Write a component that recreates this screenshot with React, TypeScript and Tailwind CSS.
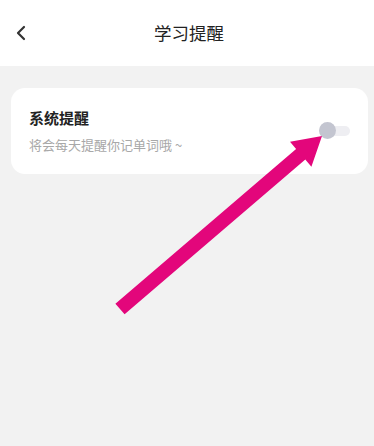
import React from 'react';

const font = { fontFamily: '"Noto Sans CJK SC", "Noto Sans", sans-serif' };

const Arrow: React.FC = () => (
  <svg className="absolute left-0 top-0 pointer-events-none" width="374" height="446" viewBox="0 0 374 446">
    <polygon
      points="124.6,314.3 115.4,303.7 296.1,148.9 290,141.7 322,136 311.4,166.7 305.3,159.5"
      fill="#e3067b"
    />
  </svg>
);

const App: React.FC = () => {
  return (
    <div className="relative w-[374px] h-[446px] bg-[#f2f2f2] overflow-hidden" style={font}>
      <header className="h-[66px] bg-white flex items-center relative">
        <button className="pl-[15px] pr-2 h-full flex items-center">
          <svg width="12" height="16" viewBox="0 0 12 16" fill="none">
            <path d="M9 2 L3 8 L9 14" stroke="#333" strokeWidth="2.2" strokeLinecap="round" strokeLinejoin="round" />
          </svg>
        </button>
        <h1 className="absolute left-0 right-0 pl-[4px] text-center text-[17.5px] text-[#222] pointer-events-none leading-none">学习提醒</h1>
      </header>

      <main className="ml-[11px] mr-[6px] pt-[22px]">
        <div className="bg-white rounded-[14px] h-[86px] pl-[18px] pr-[18px] flex items-start justify-between">
          <div className="flex flex-col gap-[13px] pt-[22px]">
            <span className="text-[15px] font-bold text-[#222] leading-none">系统提醒</span>
            <span className="text-[13px] text-[#a8a8a8] leading-none">将会每天提醒你记单词哦 ~</span>
          </div>
          <div className="relative w-[31px] h-[17px] flex items-center mt-[34px]">
            <div className="absolute left-[4px] right-0 h-[10px] rounded-full bg-[#eeeef2]" />
            <div className="absolute left-0 w-[17px] h-[17px] rounded-full bg-[#c3c5d0]" />
          </div>
        </div>
      </main>

      <Arrow />
    </div>
  );
};

export default App;
